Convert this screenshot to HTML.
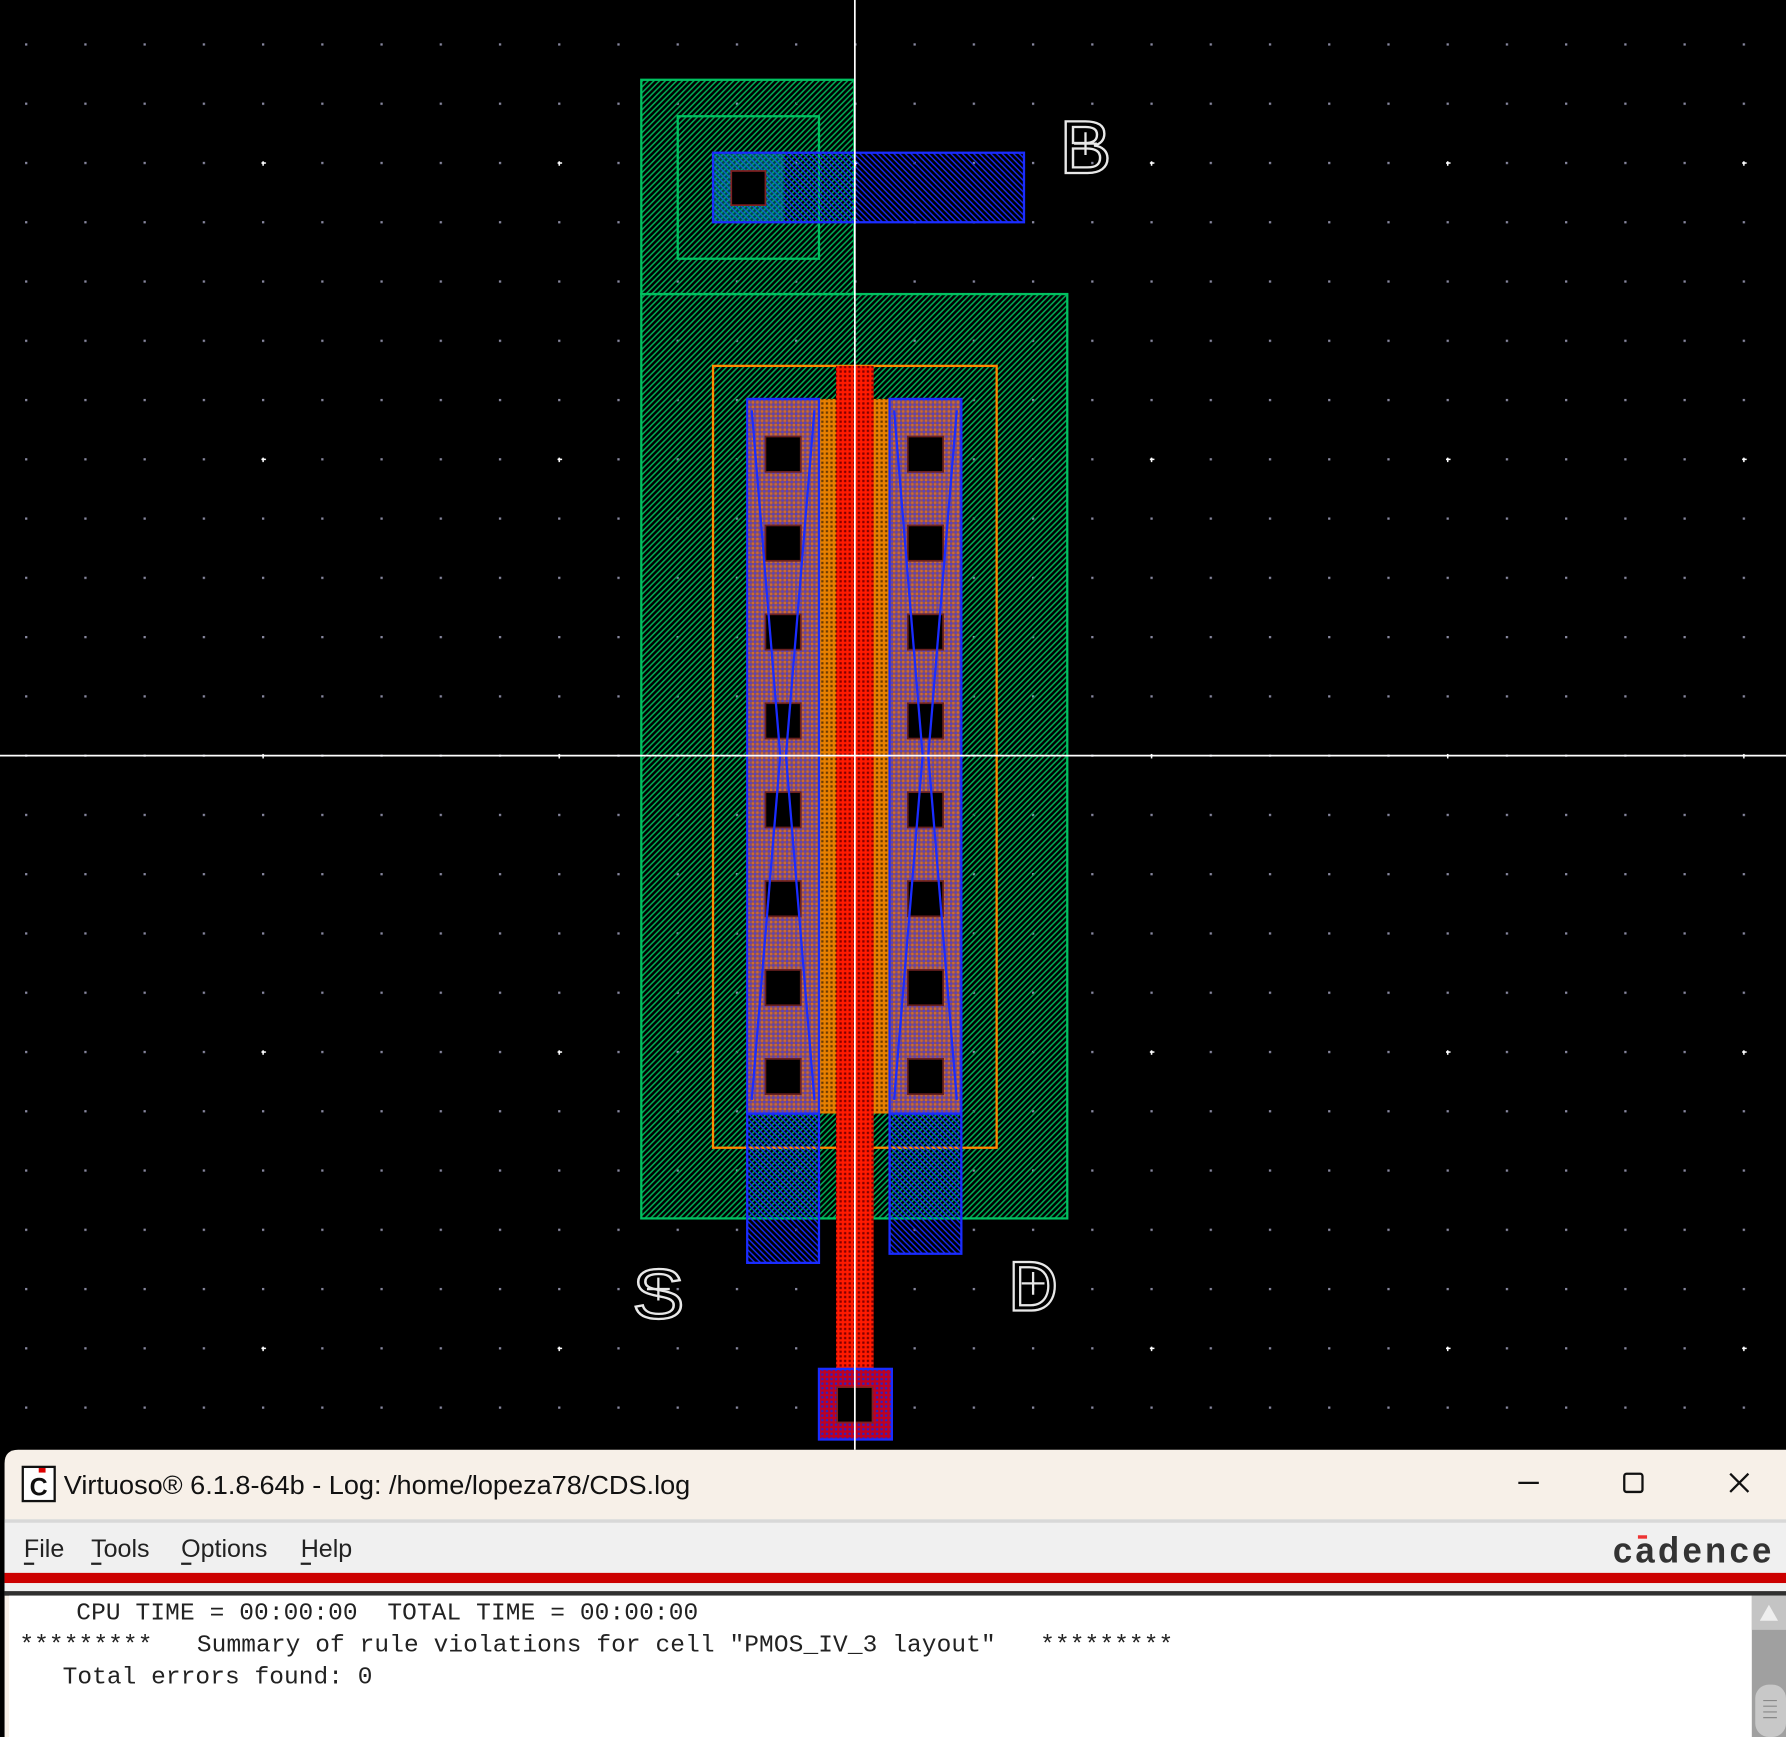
<!DOCTYPE html>
<html><head><meta charset="utf-8"><style>html,body{margin:0;padding:0;background:#000;overflow:hidden}svg{display:block}</style></head>
<body>
<svg width="1786" height="1737" viewBox="0 0 1568 1524" preserveAspectRatio="none" xmlns="http://www.w3.org/2000/svg">
<defs>
<pattern id="dots" patternUnits="userSpaceOnUse" x="22" y="38" width="52" height="52"><rect x="0" y="0" width="2" height="2" fill="#8888a0"/></pattern>
<pattern id="major" patternUnits="userSpaceOnUse" x="229.5" y="141.5" width="260" height="260"><path d="M1.5 0v4M0 1.5h4" stroke="#fff" stroke-width="1.3"/></pattern>
<pattern id="grn" patternUnits="userSpaceOnUse" width="5" height="5"><path d="M-1 6L6 -1M-1 1L1 -1M4 6L6 4" stroke="#00b058" stroke-width="1.3"/></pattern>
<pattern id="blu" patternUnits="userSpaceOnUse" width="5" height="5"><path d="M-1 -1L6 6M-1 4L1 6M4 -1L6 1" stroke="#1a2cff" stroke-width="1.2"/></pattern>
<pattern id="brn" patternUnits="userSpaceOnUse" width="4" height="4"><rect width="4" height="4" fill="#8a5060"/><rect x="0" y="0" width="2" height="2" fill="#d06a30"/><rect x="2" y="2" width="2" height="2" fill="#5a40c0"/></pattern>
<pattern id="org" patternUnits="userSpaceOnUse" width="4" height="4"><rect width="4" height="4" fill="#e88000"/><rect x="1" y="1" width="2" height="2" fill="#6a3a00"/></pattern>
<pattern id="red" patternUnits="userSpaceOnUse" width="4" height="4"><rect width="4" height="4" fill="#ff1a00"/><rect x="1" y="1" width="2" height="2" fill="#800000"/></pattern>
<pattern id="redb" patternUnits="userSpaceOnUse" width="4" height="4"><rect width="4" height="4" fill="#c00020"/><rect x="1" y="1" width="2" height="2" fill="#3020c0"/></pattern>
</defs>
<rect width="1568" height="1524" fill="#000"/>
<rect width="1568" height="1272" fill="url(#dots)"/>
<rect width="1568" height="1272" fill="url(#major)"/>

<rect x="563" y="70" width="187" height="188" fill="url(#grn)" stroke="#00c060" stroke-width="2"/>
<rect x="595" y="102" width="124" height="125" fill="none" stroke="#00c060" stroke-width="2"/>
<rect x="626" y="134" width="273" height="61" fill="url(#blu)" stroke="#1a2cff" stroke-width="2"/>
<rect x="627" y="135" width="61" height="59" fill="#00a0a0" opacity="0.45"/>
<rect x="642" y="150" width="30" height="30" fill="#000" stroke="#802020" stroke-width="1.5"/>

<rect x="563" y="258" width="374" height="811" fill="url(#grn)" stroke="#00c060" stroke-width="2"/>
<rect x="626" y="321" width="249" height="686" fill="none" stroke="#ff8800" stroke-width="2"/>

<rect x="656" y="977" width="63" height="131" fill="url(#blu)" stroke="#1a2cff" stroke-width="2"/>
<rect x="781" y="977" width="63" height="123" fill="url(#blu)" stroke="#1a2cff" stroke-width="2"/>
<rect x="719" y="350" width="64" height="627" fill="url(#org)"/>
<rect x="656" y="350" width="63" height="627" fill="url(#brn)" stroke="#1a2cff" stroke-width="2"/>
<rect x="781" y="350" width="63" height="627" fill="url(#brn)" stroke="#1a2cff" stroke-width="2"/>
<rect x="734" y="321" width="33" height="880" fill="url(#red)"/>
<rect x="719" y="1201" width="64" height="62" fill="url(#redb)" stroke="#1a2cff" stroke-width="2"/>
<rect x="735" y="1217" width="31" height="31" fill="#000" stroke="#802020" stroke-width="1.5"/>

<g fill="#000" stroke="#6a2020" stroke-width="1.5">
<rect x="672" y="383" width="31" height="31"/><rect x="797" y="383" width="31" height="31"/>
<rect x="672" y="461" width="31" height="31"/><rect x="797" y="461" width="31" height="31"/>
<rect x="672" y="539" width="31" height="31"/><rect x="797" y="539" width="31" height="31"/>
<rect x="672" y="617" width="31" height="31"/><rect x="797" y="617" width="31" height="31"/>
<rect x="672" y="695" width="31" height="31"/><rect x="797" y="695" width="31" height="31"/>
<rect x="672" y="773" width="31" height="31"/><rect x="797" y="773" width="31" height="31"/>
<rect x="672" y="851" width="31" height="31"/><rect x="797" y="851" width="31" height="31"/>
<rect x="672" y="929" width="31" height="31"/><rect x="797" y="929" width="31" height="31"/>
</g>
<g stroke="#1a2cff" stroke-width="2" fill="none">
<path d="M660 360L685 663L660 965M715 360L690 663L715 965"/>
<path d="M785 360L810 663L785 965M840 360L815 663L840 965"/>
</g>

<line x1="750.5" y1="0" x2="750.5" y2="1272" stroke="#fff" stroke-width="1.5"/>
<line x1="0" y1="663" x2="1568" y2="663" stroke="#fff" stroke-width="1.5"/>

<g fill="none" stroke="#e8e8e8" stroke-width="2" font-family="Liberation Sans, sans-serif">
<text x="930" y="152" font-size="66" textLength="46" lengthAdjust="spacingAndGlyphs">B</text>
<text x="555" y="1157" font-size="62" textLength="46" lengthAdjust="spacingAndGlyphs">S</text>
<text x="885" y="1150" font-size="62" textLength="44" lengthAdjust="spacingAndGlyphs">D</text>
<path d="M943 126h20M953 116v20M568 1131h20M578 1121v20M897 1126h20M907 1116v20"/>
</g>

<path d="M4 1284q0-12 12-12H1568V1524H4Z" fill="#f7f0e8"/>
<rect x="4" y="1333" width="1564" height="47" fill="#f0f0f0"/>
<rect x="4" y="1333" width="1564" height="3" fill="#d8d8d8"/>
<rect x="4" y="1380" width="1564" height="9" fill="#cc0000"/>
<rect x="4" y="1389" width="1564" height="7" fill="#f0f0f0"/>
<rect x="4" y="1396" width="1564" height="4" fill="#303030"/>
<rect x="8" y="1400" width="1530" height="124" fill="#fff"/>
<rect x="1538" y="1400" width="30" height="124" fill="#a0a0a0"/>
<rect x="1538" y="1400" width="30" height="30" fill="#c4c4c4"/>
<path d="M1545 1422l8-14 8 14z" fill="#eee"/>
<rect x="1541" y="1478" width="27" height="46" rx="12" fill="#c8c8c8"/>
<path d="M1548 1492h12M1548 1497h12M1548 1502h12M1548 1507h12" stroke="#888" stroke-width="1"/>

<rect x="20" y="1287" width="28" height="30" fill="#fff" stroke="#111" stroke-width="2"/>
<rect x="34" y="1288" width="6" height="4" fill="#d00"/>
<text x="26" y="1312" font-family="Liberation Sans, sans-serif" font-size="22" font-weight="bold" fill="#111">C</text>
<text x="56" y="1311" font-family="Liberation Sans, sans-serif" font-size="23" fill="#111" textLength="550" lengthAdjust="spacingAndGlyphs">Virtuoso® 6.1.8-64b - Log: /home/lopeza78/CDS.log</text>
<path d="M1333 1301h18" stroke="#111" stroke-width="2"/>
<rect x="1426" y="1293" width="16" height="16" rx="2" fill="none" stroke="#111" stroke-width="2"/>
<path d="M1519 1293l16 16M1535 1293l-16 16" stroke="#111" stroke-width="2"/>

<g font-family="Liberation Sans, sans-serif" font-size="22" fill="#222">
<text x="21" y="1366">File</text><text x="80" y="1366">Tools</text><text x="159" y="1366">Options</text><text x="264" y="1366">Help</text>
</g>
<g stroke="#222" stroke-width="2"><path d="M21 1372h9M80 1372h9M159 1372h9M264 1372h9"/></g>
<text x="1416" y="1371" font-family="Liberation Sans, sans-serif" font-size="32" font-weight="bold" fill="#333" letter-spacing="3" textLength="142" lengthAdjust="spacingAndGlyphs">cadence</text>
<rect x="1438" y="1347" width="8" height="3" fill="#e33"/>

<g font-family="Liberation Mono, monospace" font-size="21.5" fill="#222">
<text x="67" y="1421" xml:space="preserve" textLength="546" lengthAdjust="spacing">CPU TIME = 00:00:00  TOTAL TIME = 00:00:00</text>
<text x="17" y="1449" xml:space="preserve" textLength="1013" lengthAdjust="spacing">*********   Summary of rule violations for cell "PMOS_IV_3 layout"   *********</text>
<text x="55" y="1477" xml:space="preserve" textLength="272" lengthAdjust="spacing">Total errors found: 0</text>
</g>
</svg>
</body></html>
